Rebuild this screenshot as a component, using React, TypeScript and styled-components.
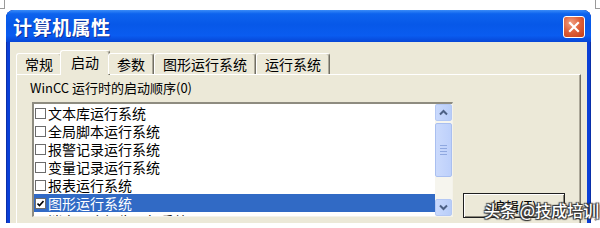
import styled, { createGlobalStyle } from 'styled-components';

const Global = createGlobalStyle`
    html, body {
        margin: 0;
        padding: 0;
        background: #ffffff;
    }
    * {
        box-sizing: border-box;
    }
`;

const Page = styled.div`
    position: relative;
    width: 600px;
    height: 228px;
    padding: 10px 0 0 6px;
    overflow: hidden;
    font-family: "Noto Sans CJK SC", "Liberation Sans", sans-serif;
`;

const Window = styled.div`
    width: 585px;
    height: 213px;
    display: flex;
    flex-direction: column;
    border-radius: 8px 8px 0 0;
    background: #0a3fd6;
    box-shadow: inset 1px 0 0 #0a2fa8, inset -1px 0 0 #0a2fa8;
    overflow: hidden;
`;

const TitleBar = styled.div`
    height: 32px;
    flex: none;
    display: flex;
    align-items: center;
    justify-content: space-between;
    padding: 0 6px 0 7px;
    background: linear-gradient(to bottom, #3a8cf8 0%, #0d63ee 12%, #0758e8 45%, #0a5cf0 80%, #0746d6 100%);
`;

const Title = styled.span`
    color: #ffffff;
    font-size: 19px;
    font-weight: 700;
    letter-spacing: 0.5px;
    text-shadow: 1px 1px 0 #0b2f9a;
    line-height: 1;
`;

const CloseButton = styled.div`
    width: 22px;
    height: 22px;
    margin-top: 2px;
    border: 1px solid #ffffff;
    border-radius: 3px;
    display: flex;
    align-items: center;
    justify-content: center;
    background: radial-gradient(circle at 35% 30%, #f2a184 0%, #e0623c 45%, #c43c16 100%);
`;

const Body = styled.div`
    flex: 1;
    margin: 0 4px;
    padding: 8px 6px 0 6px;
    background: #ece9d8;
    display: flex;
    flex-direction: column;
`;

const TabRow = styled.div`
    display: flex;
    align-items: flex-end;
    height: 24px;
    position: relative;
    z-index: 1;
`;

const Tab = styled.div<{ $active?: boolean }>`
    height: ${p => (p.$active ? '25px' : '21px')};
    margin: ${p => (p.$active ? '0 -2px -1px -2px' : '0')};
    padding: 0 ${p => (p.$active ? '10px' : '8px')};
    padding-bottom: ${p => (p.$active ? '2px' : '0')};
    display: flex;
    align-items: center;
    font-size: 14px;
    line-height: 18px;
    color: #000000;
    background: #ece9d8;
    border-top: 1px solid #ffffff;
    border-left: 1px solid #ffffff;
    border-right: 1px solid #716f64;
    border-radius: 3px 3px 0 0;
    box-shadow: inset -1px 0 0 #aca899;
`;

const Panel = styled.div`
    width: 565px;
    flex: 1;
    border-top: 1px solid #ffffff;
    border-left: 1px solid #ffffff;
    border-right: 1px solid #716f64;
    box-shadow: inset -1px 0 0 #aca899;
    padding: 5px 15px 0 15px;
    display: grid;
    grid-template-columns: 421px 102px;
    grid-template-rows: 16px 115px;
    column-gap: 10px;
    row-gap: 6px;
`;

const Label = styled.div`
    grid-column: 1 / span 2;
    margin-left: -2px;
    font-size: 13px;
    line-height: 16px;
    color: #000000;
`;

const ListBox = styled.div`
    display: flex;
    background: #ffffff;
    border-top: 2px solid #8e8c80;
    border-left: 2px solid #8e8c80;
    border-right: 1px solid #f4f2ea;
    border-bottom: 1px solid #f4f2ea;
    overflow: hidden;
`;

const Items = styled.div`
    flex: 1;
    display: flex;
    flex-direction: column;
    overflow: hidden;
`;

const Item = styled.div<{ $selected?: boolean }>`
    height: 18px;
    flex: none;
    display: flex;
    align-items: center;
    gap: 2px;
    padding-left: 1px;
    font-size: 14px;
    line-height: 18px;
    color: ${p => (p.$selected ? '#ffffff' : '#000000')};
    background: ${p => (p.$selected ? '#316ac5' : 'transparent')};
`;

const Check = styled.span`
    width: 11px;
    height: 11px;
    flex: none;
    border: 1px solid #6b6b6b;
    background: #ffffff;
    display: flex;
    align-items: center;
    justify-content: center;
`;

const ScrollBar = styled.div`
    width: 17px;
    flex: none;
    display: flex;
    flex-direction: column;
    background: #f6f5ee;
    gap: 2px;
`;

const ArrowButton = styled.div`
    height: 17px;
    flex: none;
    border: 1px solid #b4c8f4;
    border-radius: 2px;
    background: linear-gradient(to right, #c9d9fd, #b8cdf8);
    display: flex;
    align-items: center;
    justify-content: center;
`;

const Thumb = styled.div`
    height: 54px;
    flex: none;
    border: 1px solid #a9bff0;
    border-radius: 2px;
    background: linear-gradient(to right, #cbdafc, #bdd0fb);
    display: flex;
    flex-direction: column;
    align-items: center;
    justify-content: center;
    gap: 2px;
`;

const Grip = styled.span`
    width: 7px;
    height: 1px;
    background: #8fa8e0;
`;

const Track = styled.div`
    flex: 1;
`;

const ButtonColumn = styled.div`
    display: flex;
    align-items: flex-end;
`;

const EditButton = styled.div`
    width: 102px;
    height: 25px;
    margin-bottom: -1px;
    border: 1px solid #1f1f1f;
    box-shadow: inset 1px 1px 0 #ffffff, inset -1px -1px 0 #8a877a;
    background: #ece9d8;
    display: flex;
    align-items: center;
    justify-content: center;
    font-size: 14px;
    line-height: 18px;
    color: #000000;
`;

const Watermark = styled.div`
    position: absolute;
    left: 484px;
    top: 200px;
    font-size: 16px;
    line-height: 20px;
    font-weight: 500;
    color: #ffffff;
    white-space: nowrap;
    text-shadow: 1px 1px 1px #333, -1px -1px 1px #333, 1px -1px 1px #333, -1px 1px 1px #333;
`;

const Mark = styled.span<{ $side: 'left' | 'right' }>`
    position: absolute;
    top: 0;
    ${p => (p.$side === 'left' ? 'left: 0;' : 'left: 595px;')}
    width: 5px;
    height: 9px;
    border-bottom: 1px solid #9a9a9a;
    ${p => (p.$side === 'left' ? 'border-right: 1px solid #9a9a9a;' : 'border-left: 1px solid #9a9a9a;')}
`;

const Return = styled.span`
    position: absolute;
    left: 594px;
    top: 214px;
    font-size: 8px;
    line-height: 10px;
    color: #8a8a8a;
`;

const items = [
    '文本库运行系统',
    '全局脚本运行系统',
    '报警记录运行系统',
    '变量记录运行系统',
    '报表运行系统',
    '图形运行系统',
    '消息顺序报告运行系统',
];

const Chevron = ({ up }: { up?: boolean }) => (
    <svg width="9" height="7" viewBox="0 0 9 7">
        <path
            d={up ? 'M1 5.5 L4.5 2 L8 5.5' : 'M1 1.5 L4.5 5 L8 1.5'}
            fill="none"
            stroke="#4d6185"
            strokeWidth="2"
        />
    </svg>
);

const App = () => {
    const tabs = ['常规', '启动', '参数', '图形运行系统', '运行系统'];

    return (
        <Page>
            <Global />
            <Mark $side="left" />
            <Mark $side="right" />
            <Window>
                <TitleBar>
                    <Title>计算机属性</Title>
                    <CloseButton>
                        <svg width="12" height="12" viewBox="0 0 12 12">
                            <path d="M2 2 L10 10 M10 2 L2 10" stroke="#ffffff" strokeWidth="2.2" strokeLinecap="square" />
                        </svg>
                    </CloseButton>
                </TitleBar>
                <Body>
                    <TabRow>
                        {tabs.map(t => (
                            <Tab key={t} $active={t === '启动'}>{t}</Tab>
                        ))}
                    </TabRow>
                    <Panel>
                        <Label>WinCC 运行时的启动顺序(0)</Label>
                        <ListBox>
                            <Items>
                                {items.map((name, i) => (
                                    <Item key={name} $selected={i === 5}>
                                        <Check>
                                            {i === 5 && (
                                                <svg width="7" height="7" viewBox="0 0 7 7">
                                                    <path d="M0.5 3.5 L2.5 5.5 L6.5 1" fill="none" stroke="#000" strokeWidth="1.6" />
                                                </svg>
                                            )}
                                        </Check>
                                        {name}
                                    </Item>
                                ))}
                            </Items>
                            <ScrollBar>
                                <ArrowButton><Chevron up /></ArrowButton>
                                <Thumb>
                                    <Grip />
                                    <Grip />
                                    <Grip />
                                    <Grip />
                                </Thumb>
                                <Track />
                                <ArrowButton><Chevron /></ArrowButton>
                            </ScrollBar>
                        </ListBox>
                        <ButtonColumn>
                            <EditButton>编辑(T)</EditButton>
                        </ButtonColumn>
                    </Panel>
                </Body>
            </Window>
            <Watermark>头条 @技成培训</Watermark>
            <Return>↵</Return>
        </Page>
    );
};

export default App;
